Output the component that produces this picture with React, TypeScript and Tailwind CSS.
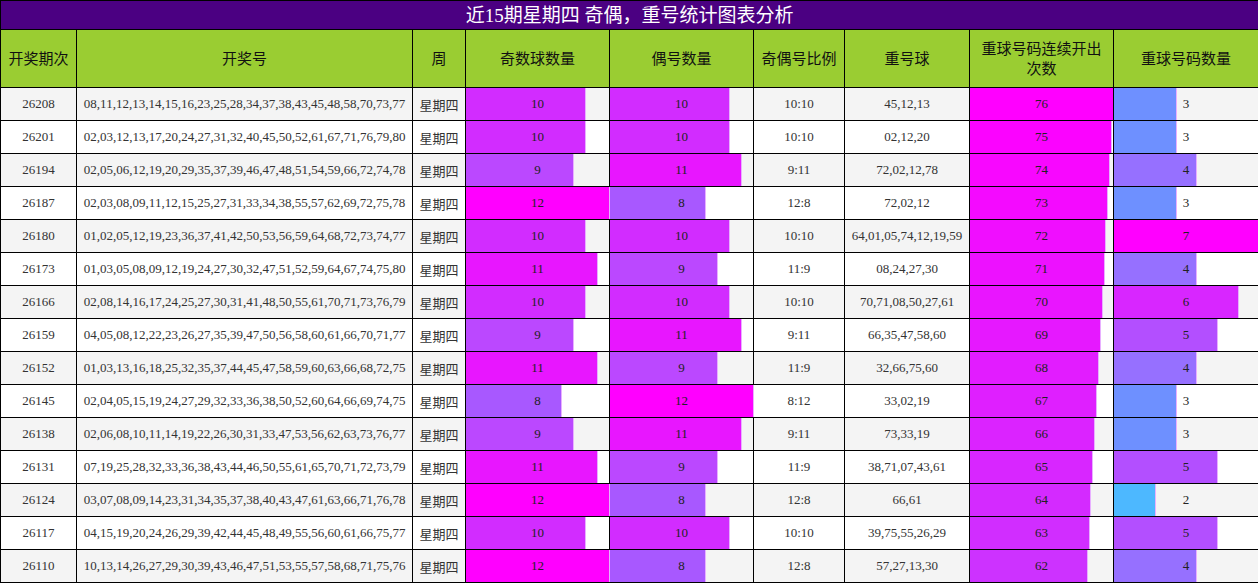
type Row = {
  issue: string;
  numbers: string;
  odd: number;
  even: number;
  repeats: string;
  streak: number;
  repeatCount: number;
};

const rows: Row[] = [
  { issue: "26208", numbers: "08,11,12,13,14,15,16,23,25,28,34,37,38,43,45,48,58,70,73,77", odd: 10, even: 10, repeats: "45,12,13", streak: 76, repeatCount: 3 },
  { issue: "26201", numbers: "02,03,12,13,17,20,24,27,31,32,40,45,50,52,61,67,71,76,79,80", odd: 10, even: 10, repeats: "02,12,20", streak: 75, repeatCount: 3 },
  { issue: "26194", numbers: "02,05,06,12,19,20,29,35,37,39,46,47,48,51,54,59,66,72,74,78", odd: 9, even: 11, repeats: "72,02,12,78", streak: 74, repeatCount: 4 },
  { issue: "26187", numbers: "02,03,08,09,11,12,15,25,27,31,33,34,38,55,57,62,69,72,75,78", odd: 12, even: 8, repeats: "72,02,12", streak: 73, repeatCount: 3 },
  { issue: "26180", numbers: "01,02,05,12,19,23,36,37,41,42,50,53,56,59,64,68,72,73,74,77", odd: 10, even: 10, repeats: "64,01,05,74,12,19,59", streak: 72, repeatCount: 7 },
  { issue: "26173", numbers: "01,03,05,08,09,12,19,24,27,30,32,47,51,52,59,64,67,74,75,80", odd: 11, even: 9, repeats: "08,24,27,30", streak: 71, repeatCount: 4 },
  { issue: "26166", numbers: "02,08,14,16,17,24,25,27,30,31,41,48,50,55,61,70,71,73,76,79", odd: 10, even: 10, repeats: "70,71,08,50,27,61", streak: 70, repeatCount: 6 },
  { issue: "26159", numbers: "04,05,08,12,22,23,26,27,35,39,47,50,56,58,60,61,66,70,71,77", odd: 9, even: 11, repeats: "66,35,47,58,60", streak: 69, repeatCount: 5 },
  { issue: "26152", numbers: "01,03,13,16,18,25,32,35,37,44,45,47,58,59,60,63,66,68,72,75", odd: 11, even: 9, repeats: "32,66,75,60", streak: 68, repeatCount: 4 },
  { issue: "26145", numbers: "02,04,05,15,19,24,27,29,32,33,36,38,50,52,60,64,66,69,74,75", odd: 8, even: 12, repeats: "33,02,19", streak: 67, repeatCount: 3 },
  { issue: "26138", numbers: "02,06,08,10,11,14,19,22,26,30,31,33,47,53,56,62,63,73,76,77", odd: 9, even: 11, repeats: "73,33,19", streak: 66, repeatCount: 3 },
  { issue: "26131", numbers: "07,19,25,28,32,33,36,38,43,44,46,50,55,61,65,70,71,72,73,79", odd: 11, even: 9, repeats: "38,71,07,43,61", streak: 65, repeatCount: 5 },
  { issue: "26124", numbers: "03,07,08,09,14,23,31,34,35,37,38,40,43,47,61,63,66,71,76,78", odd: 12, even: 8, repeats: "66,61", streak: 64, repeatCount: 2 },
  { issue: "26117", numbers: "04,15,19,20,24,26,29,39,42,44,45,48,49,55,56,60,61,66,75,77", odd: 10, even: 10, repeats: "39,75,55,26,29", streak: 63, repeatCount: 5 },
  { issue: "26110", numbers: "10,13,14,26,27,29,30,39,43,46,47,51,53,55,57,58,68,71,75,76", odd: 12, even: 8, repeats: "57,27,13,30", streak: 62, repeatCount: 4 },
];

// blue -> violet -> magenta, keyed on value / column max
const stops: [number, number, number, number][] = [
  [0.286, 77, 184, 255],
  [0.429, 110, 144, 255],
  [0.571, 150, 112, 255],
  [0.667, 168, 88, 255],
  [0.75, 187, 72, 255],
  [0.833, 210, 44, 255],
  [0.917, 232, 22, 255],
  [1, 255, 0, 255],
];

function barColor(ratio: number) {
  if (ratio <= stops[0][0]) return `rgb(${stops[0][1]},${stops[0][2]},${stops[0][3]})`;
  for (let i = 1; i < stops.length; i++) {
    const [p1, r1, g1, b1] = stops[i];
    const [p0, r0, g0, b0] = stops[i - 1];
    if (ratio <= p1) {
      const t = (ratio - p0) / (p1 - p0);
      return `rgb(${Math.round(r0 + (r1 - r0) * t)},${Math.round(g0 + (g1 - g0) * t)},${Math.round(b0 + (b1 - b0) * t)})`;
    }
  }
  return "rgb(255,0,255)";
}

function Bar({ value, max }: { value: number; max: number }) {
  const ratio = value / max;
  return (
    <div className="grid h-[32px]">
      <div
        className="col-start-1 row-start-1 box-content h-full border-r border-r-[#e8b0ff]"
        style={{ width: `${ratio * 100}%`, backgroundColor: barColor(ratio) }}
      />
      <div className="col-start-1 row-start-1 flex items-center justify-center text-[13px] text-[#222]">
        {value}
      </div>
    </div>
  );
}

const headers = ["开奖期次", "开奖号", "周", "奇数球数量", "偶号数量", "奇偶号比例", "重号球", "重球号码连续开出次数", "重球号码数量"];
const widths = ["w-[76px]", "w-[336px]", "w-[53px]", "w-[144px]", "w-[144px]", "w-[91px]", "w-[125px]", "w-[144px]", "w-[145px]"];

export default function App() {
  return (
    <div className="overflow-hidden font-['Liberation_Serif','Noto_Sans_CJK_SC',serif] text-[#333]">
      <table className="w-[1258px] table-fixed border-collapse">
        <colgroup>
          {widths.map((w, i) => (
            <col key={i} className={w} />
          ))}
        </colgroup>
        <thead>
          <tr className="h-[29px]">
            <th colSpan={9} className="border border-black bg-[#4b0082] p-0 text-[19px] font-normal leading-[27px] text-white">
              近15期星期四 奇偶，重号统计图表分析
            </th>
          </tr>
          <tr className="h-[58px]">
            {headers.map((h, i) => (
              <th
                key={h}
                className={`border border-black bg-[#9acd32] py-0 text-[15px] font-normal leading-[20px] text-[#111] ${i === 7 ? "px-[8px]" : "px-0 whitespace-nowrap"}`}
              >
                {h}
              </th>
            ))}
          </tr>
        </thead>
        <tbody>
          {rows.map((r, i) => (
            <tr key={r.issue} className={`h-[33px] ${i % 2 === 0 ? "bg-[#f4f4f4]" : "bg-white"}`}>
              <td className="border border-black p-0 text-center text-[13px]">{r.issue}</td>
              <td className="border border-black p-0 text-center text-[13px] whitespace-nowrap">{r.numbers}</td>
              <td className="border border-black p-0 pt-[3px] text-center text-[13px]">星期四</td>
              <td className="border border-black p-0">
                <Bar value={r.odd} max={12} />
              </td>
              <td className="border border-black p-0">
                <Bar value={r.even} max={12} />
              </td>
              <td className="border border-black p-0 text-center text-[13px]">
                {r.odd}:{r.even}
              </td>
              <td className="border border-black p-0 text-center text-[13px] whitespace-nowrap">{r.repeats}</td>
              <td className="border border-black p-0 overflow-hidden">
                <Bar value={r.streak} max={76} />
              </td>
              <td className="border border-black p-0 overflow-hidden">
                <Bar value={r.repeatCount} max={7} />
              </td>
            </tr>
          ))}
        </tbody>
      </table>
    </div>
  );
}
